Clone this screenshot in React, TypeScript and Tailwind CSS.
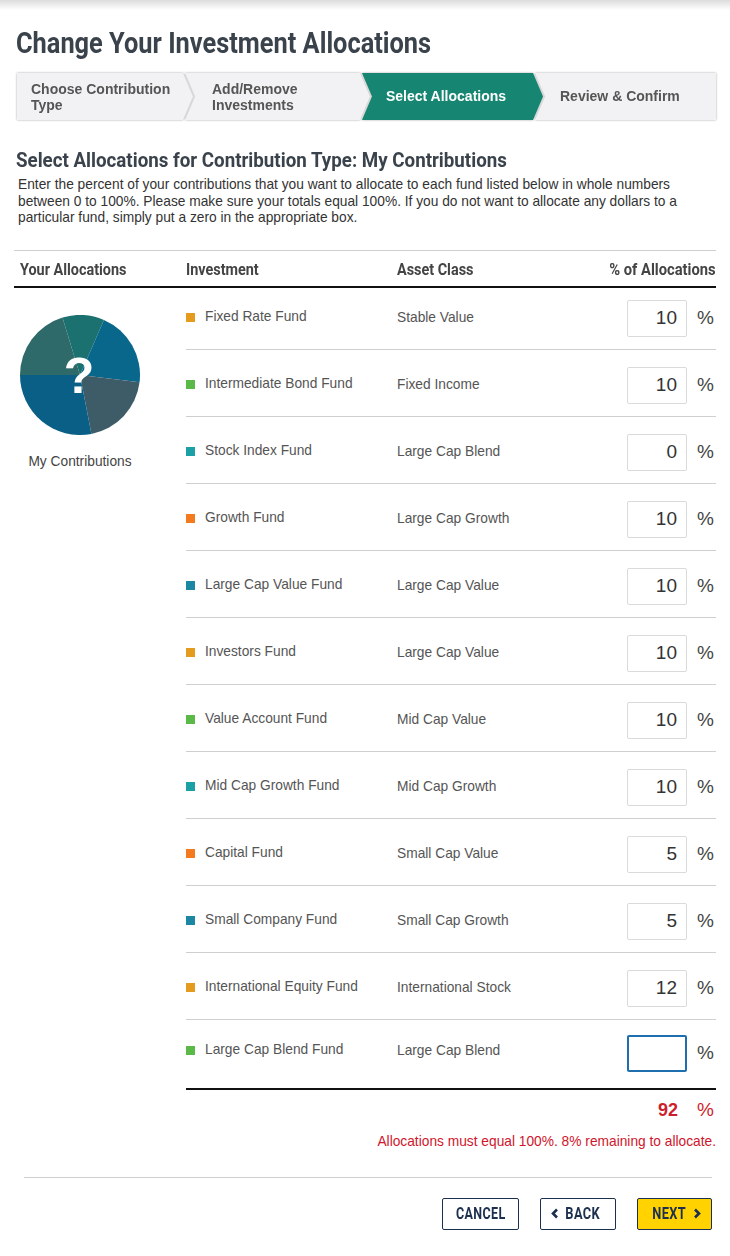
import React from "react"

const cond = "font-['Roboto',sans-serif]"
const sans = "font-['Liberation_Sans',Arial,sans-serif]"

type Fund = { name: string; asset: string; color: string; value: string }

const funds: Fund[] = [
  { name: "Fixed Rate Fund", asset: "Stable Value", color: "bg-[#e59b1d]", value: "10" },
  { name: "Intermediate Bond Fund", asset: "Fixed Income", color: "bg-[#5bb947]", value: "10" },
  { name: "Stock Index Fund", asset: "Large Cap Blend", color: "bg-[#1aa0a5]", value: "0" },
  { name: "Growth Fund", asset: "Large Cap Growth", color: "bg-[#f47a20]", value: "10" },
  { name: "Large Cap Value Fund", asset: "Large Cap Value", color: "bg-[#1b87a3]", value: "10" },
  { name: "Investors Fund", asset: "Large Cap Value", color: "bg-[#e59b1d]", value: "10" },
  { name: "Value Account Fund", asset: "Mid Cap Value", color: "bg-[#5bb947]", value: "10" },
  { name: "Mid Cap Growth Fund", asset: "Mid Cap Growth", color: "bg-[#1aa0a5]", value: "10" },
  { name: "Capital Fund", asset: "Small Cap Value", color: "bg-[#f47a20]", value: "5" },
  { name: "Small Company Fund", asset: "Small Cap Growth", color: "bg-[#1b87a3]", value: "5" },
  { name: "International Equity Fund", asset: "International Stock", color: "bg-[#e59b1d]", value: "12" },
  { name: "Large Cap Blend Fund", asset: "Large Cap Blend", color: "bg-[#5bb947]", value: "" },
]

const Pie = () => {
  const cx = 60
  const cy = 60
  const r = 60
  const pt = (deg: number) => {
    const a = ((deg - 90) * Math.PI) / 180
    return `${cx + r * Math.cos(a)} ${cy + r * Math.sin(a)}`
  }
  const slice = (a: number, b: number) => {
    const large = b - a > 180 ? 1 : 0
    return `M ${cx} ${cy} L ${pt(a)} A ${r} ${r} 0 ${large} 1 ${pt(b)} Z`
  }
  return (
    <svg width="120" height="120" viewBox="0 0 120 120">
      <path d={slice(-17, 23.5)} fill="#1b7170" />
      <path d={slice(23.5, 97)} fill="#08678b" />
      <path d={slice(97, 169)} fill="#3d5c67" />
      <path d={slice(169, 270)} fill="#095f86" />
      <path d={slice(270, 343)} fill="#2e6a6a" />
      <text
        x="59"
        y="78"
        textAnchor="middle"
        fill="#fff"
        fontSize="50"
        fontWeight="700"
        fontFamily="Liberation Sans, Arial, sans-serif"
      >
        ?
      </text>
    </svg>
  )
}

const Stepper = () => {
  const arrowBoth = "[clip-path:polygon(0_0,calc(100%-10px)_0,100%_50%,calc(100%-10px)_100%,0_100%,10px_50%)]"
  return (
    <div className={`flex h-[47px] ml-[17px] w-[699px] ${sans} drop-shadow-[0_0_1px_rgba(0,0,0,0.35)]`}>
      <div className="w-[176px] shrink-0 bg-[#f2f2f4] [clip-path:polygon(0_0,calc(100%-10px)_0,100%_50%,calc(100%-10px)_100%,0_100%)] flex items-center pl-[14px] text-[14px] font-bold leading-[16px] text-[#555]">
        Choose Contribution
        <br />
        Type
      </div>
      <div className={`w-[185px] shrink-0 -ml-[8px] bg-[#f2f2f4] ${arrowBoth} flex items-center pl-[27px] text-[14px] font-bold leading-[16px] text-[#555]`}>
        Add/Remove
        <br />
        Investments
      </div>
      <div className={`w-[181px] shrink-0 -ml-[8px] bg-[#168672] ${arrowBoth} flex items-center pl-[24px] text-[14px] font-bold text-white`}>
        Select Allocations
      </div>
      <div className="w-[181px] shrink-0 -ml-[8px] bg-[#f2f2f4] [clip-path:polygon(0_0,100%_0,100%_100%,0_100%,10px_50%)] flex items-center pl-[25px] text-[14px] font-bold text-[#555]">
        Review &amp; Confirm
      </div>
    </div>
  )
}

const FundRow = ({ fund, index, last }: { fund: Fund; index: number; last: boolean }) => {
  const first = index === 0
  return (
    <div
      className={`flex items-start ${first ? "h-[62px] pt-[12px]" : last ? "h-[68px] pt-[15px]" : "h-[67px] pt-[17px]"} ${
        last ? "" : "border-b border-[#cfcfcf]"
      }`}
    >
      <div className={`flex items-center w-[211px] ${last ? "mt-[8px]" : "mt-[10px]"} h-[16px]`}>
        <span className={`w-[9px] h-[9px] ${fund.color}`} />
        <span className="ml-[10px] text-[13.75px] text-[#555]">{fund.name}</span>
      </div>
      <div className={`w-[230px] ${last ? "mt-[8px]" : "mt-[10px]"} h-[16px] text-[13.75px] text-[#555] leading-[16px]`}>
        {fund.asset}
      </div>
      <div
        className={`w-[60px] h-[37px] rounded-[2px] flex items-center justify-end pr-[9px] text-[19px] text-[#333] bg-white ${
          last ? "border-2 border-[#1f6fae]" : "border border-[#dadada]"
        }`}
      >
        {fund.value}
      </div>
      <div className="flex-1 h-[37px] flex items-center justify-end pr-[2px] text-[19px] text-[#444]">%</div>
    </div>
  )
}

export default function App() {
  return (
    <div className={`w-[730px] min-h-[1256px] bg-white ${sans}`}>
      <div className="h-[10px] bg-gradient-to-b from-[#dcdcdc] to-white" />
      <h1 className={`pl-[16px] pt-[16px] text-[29px] leading-[34px] font-bold text-[#3a424b] ${cond}`}>
        <span className="inline-block origin-left scale-x-[0.875] whitespace-nowrap">
          Change Your Investment Allocations
        </span>
      </h1>
      <div className="mt-[13px]">
        <Stepper />
      </div>
      <h2 className={`pl-[16px] mt-[27px] text-[20.5px] leading-[26px] font-bold text-[#3a424b] ${cond}`}>
        <span className="inline-block origin-left scale-x-[0.914] whitespace-nowrap">
          Select Allocations for Contribution Type: My Contributions
        </span>
      </h2>
      <p className="pl-[18px] pr-[24px] mt-[4px] text-[13.75px] leading-[16.5px] text-[#333]">
        Enter the percent of your contributions that you want to allocate to each fund listed below in whole numbers
        between 0 to 100%. Please make sure your totals equal 100%. If you do not want to allocate any dollars to a
        particular fund, simply put a zero in the appropriate box.
      </p>

      <div className="ml-[14px] w-[702px] mt-[23px]">
        <div
          className={`flex items-center h-[38px] pt-[4px] border-t border-[#cfcfcf] border-b-2 border-b-[#111] text-[16px] font-bold text-[#444] ${cond}`}
        >
          <div className="w-[172px] pl-[6px]">
            <span className="inline-block origin-left scale-x-[0.9] whitespace-nowrap">Your Allocations</span>
          </div>
          <div className="w-[211px]">
            <span className="inline-block origin-left scale-x-[0.9] whitespace-nowrap">Investment</span>
          </div>
          <div className="flex-1">
            <span className="inline-block origin-left scale-x-[0.9] whitespace-nowrap">Asset Class</span>
          </div>
          <div>
            <span className="inline-block origin-right scale-x-[0.92] whitespace-nowrap">% of Allocations</span>
          </div>
        </div>
        <div className="flex">
          <div className="w-[172px] flex flex-col">
            <div className="w-[120px] ml-[6px] flex flex-col items-center">
              <div className="mt-[27px]">
                <Pie />
              </div>
              <div className="mt-[17px] text-[13.75px] text-[#444] whitespace-nowrap">My Contributions</div>
            </div>
          </div>
          <div className="flex-1">
            {funds.map((f, i) => (
              <FundRow key={f.name} fund={f} index={i} last={i === funds.length - 1} />
            ))}
            <div className="border-t-2 border-[#111] h-[44px] flex items-center justify-end pr-[2px]">
              <span className="text-[18px] font-bold text-[#cc1f2d] mr-[19px]">92</span>
              <span className="text-[19px] text-[#cc1f2d]">%</span>
            </div>
            <div className="text-right text-[13.75px] text-[#d0152c] leading-[16px] mt-[2px]">
              Allocations must equal 100%. 8% remaining to allocate.
            </div>
          </div>
        </div>
      </div>

      <div className="ml-[24px] mr-[18px] mt-[27px] border-t border-[#cfcfcf]" />
      <div className={`flex justify-end gap-[21px] pr-[18px] mt-[20px] ${cond}`}>
        <button className="w-[77px] h-[32px] border border-[#1c2f4f] rounded-[2px] text-[16px] font-bold text-[#1c2f4f] flex items-center justify-center">
          <span className="inline-block scale-x-[0.78] tracking-[0.5px]">CANCEL</span>
        </button>
        <button className="w-[76px] h-[32px] border border-[#1c2f4f] rounded-[2px] text-[16px] font-bold text-[#1c2f4f] flex items-center justify-center gap-[5px]">
          <svg width="8" height="11" viewBox="0 0 8 11">
            <path d="M6 1.5 L2 5.5 L6 9.5" stroke="#1c2f4f" strokeWidth="2.6" fill="none" />
          </svg>
          <span className="inline-block scale-x-[0.8] tracking-[0.5px] -ml-[3px]">BACK</span>
        </button>
        <button className="w-[75px] h-[32px] border border-[#1c2f4f] rounded-[2px] bg-[#ffd200] text-[16px] font-bold text-[#1c2f4f] flex items-center justify-center gap-[5px]">
          <span className="inline-block scale-x-[0.8] tracking-[0.5px] -mr-[3px]">NEXT</span>
          <svg width="8" height="11" viewBox="0 0 8 11">
            <path d="M2 1.5 L6 5.5 L2 9.5" stroke="#1c2f4f" strokeWidth="2.6" fill="none" />
          </svg>
        </button>
      </div>
    </div>
  )
}
